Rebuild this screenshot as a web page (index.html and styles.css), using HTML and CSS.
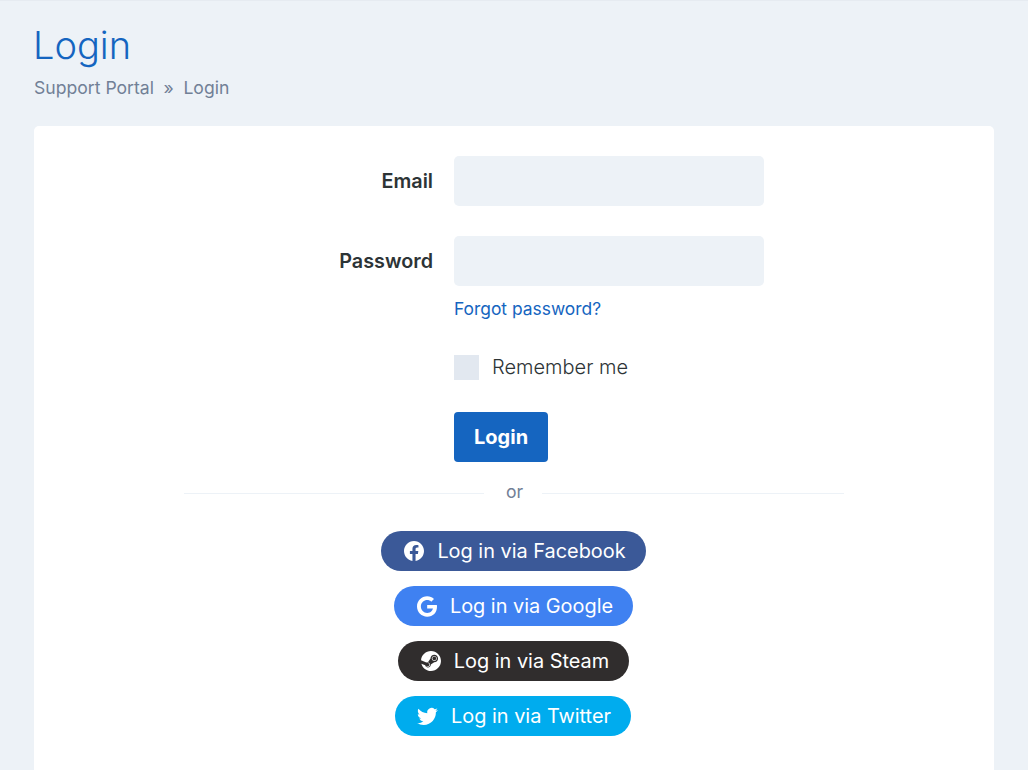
FILE: index.html
```html
<!DOCTYPE html>
<html lang="en">
<head>
    <meta charset="UTF-8">
    <title>Login - Support Portal</title>
    <link rel="stylesheet" href="styles.css">
</head>
<body>
    <div class="page-head">
        <h1>Login</h1>
        <div class="breadcrumb">
            <span>Support Portal</span>
            <span>»</span>
            <span>Login</span>
        </div>
    </div>

    <div class="card">
        <form class="login-form">
            <div class="row">
                <label class="row-label">Email</label>
                <div class="field"><input type="text" class="input"></div>
            </div>
            <div class="row">
                <label class="row-label">Password</label>
                <div class="field">
                    <input type="password" class="input">
                    <a class="forgot" href="#">Forgot password?</a>
                </div>
            </div>
            <div class="row row-remember">
                <div class="row-label"></div>
                <div class="field remember">
                    <span class="checkbox"></span>
                    <span class="remember-text">Remember me</span>
                </div>
            </div>
            <div class="row row-submit">
                <div class="row-label"></div>
                <div class="field"><button type="button" class="btn-login">Login</button></div>
            </div>
        </form>

        <div class="divider"><span>or</span></div>

        <div class="socials">
            <a class="social facebook" href="#">
                <svg viewBox="0 0 24 24" width="20" height="20"><path fill="#fff" d="M24 12.07C24 5.4 18.63 0 12 0S0 5.4 0 12.07c0 6.03 4.39 11.02 10.13 11.93v-8.44H7.08v-3.49h3.05V9.41c0-3.02 1.79-4.69 4.53-4.69 1.31 0 2.68.24 2.68.24v2.97h-1.51c-1.49 0-1.96.93-1.96 1.89v2.25h3.33l-.53 3.49h-2.8V24C19.61 23.09 24 18.1 24 12.07z"/></svg>
                Log in via Facebook
            </a>
            <a class="social google" href="#">
                <svg viewBox="0 0 488 512" width="20" height="21"><path fill="#fff" d="M488 261.8C488 403.3 391.1 504 248 504 110.8 504 0 393.2 0 256S110.8 8 248 8c66.8 0 123 24.5 166.3 64.9l-67.5 64.9C258.5 52.6 94.3 116.6 94.3 256c0 86.5 69.1 156.6 153.7 156.6 98.2 0 135-70.4 140.8-106.9H248v-85.3h236.1c2.3 12.7 3.9 24.9 3.9 41.4z"/></svg>
                Log in via Google
            </a>
            <a class="social steam" href="#">
                <svg viewBox="0 0 24 24" width="20" height="20"><path fill="#fff" d="M11.979 0C5.678 0 .511 4.86.022 11.037l6.432 2.658c.545-.371 1.203-.59 1.912-.59.063 0 .125.004.188.006l2.861-4.142V8.91c0-2.495 2.028-4.524 4.524-4.524 2.494 0 4.524 2.031 4.524 4.527s-2.03 4.525-4.524 4.525h-.105l-4.076 2.911c0 .052.004.105.004.159 0 1.875-1.515 3.396-3.39 3.396-1.635 0-3.016-1.173-3.331-2.727L.436 15.27C1.862 20.307 6.486 24 11.979 24c6.627 0 11.999-5.373 11.999-12S18.605 0 11.979 0zM7.54 18.21l-1.473-.61c.262.543.714.999 1.314 1.25 1.297.539 2.793-.076 3.332-1.375.263-.63.264-1.319.005-1.949s-.75-1.121-1.377-1.383c-.624-.26-1.29-.249-1.878-.03l1.523.63c.956.4 1.409 1.5 1.009 2.455-.397.957-1.497 1.41-2.454 1.012H7.54zm11.415-9.303c0-1.662-1.353-3.015-3.015-3.015-1.665 0-3.015 1.353-3.015 3.015 0 1.665 1.35 3.015 3.015 3.015 1.663 0 3.015-1.35 3.015-3.015zm-5.273-.005c0-1.252 1.013-2.266 2.265-2.266 1.249 0 2.266 1.014 2.266 2.266 0 1.251-1.017 2.265-2.266 2.265-1.253 0-2.265-1.014-2.265-2.265z"/></svg>
                Log in via Steam
            </a>
            <a class="social twitter" href="#">
                <svg viewBox="0 0 24 24" width="21" height="21"><path fill="#fff" d="M23.95 4.57a10 10 0 0 1-2.82.77 4.96 4.96 0 0 0 2.16-2.72c-.95.55-2 .96-3.13 1.19a4.92 4.92 0 0 0-8.38 4.48C7.69 8.1 4.07 6.13 1.64 3.16a4.82 4.82 0 0 0-.67 2.48c0 1.71.87 3.21 2.19 4.1a4.9 4.9 0 0 1-2.23-.62v.06a4.92 4.92 0 0 0 3.95 4.83 5 5 0 0 1-2.21.08 4.94 4.94 0 0 0 4.6 3.42A9.87 9.87 0 0 1 0 19.54a14 14 0 0 0 7.56 2.21c9.05 0 14-7.5 14-13.98 0-.21 0-.42-.02-.63a9.94 9.94 0 0 0 2.41-2.57z"/></svg>
                Log in via Twitter
            </a>
        </div>
    </div>
</body>
</html>
```

FILE: styles.css
```css
* {
    box-sizing: border-box;
}
html, body {
    height: 770px;
    overflow: hidden;
}
body {
    margin: 0;
    padding: 0 34px;
    font-family: Inter, sans-serif;
    font-size: 20px;
    color: #363a3f;
    background-color: #edf2f7;
    border-top: 1px solid #e6ebf1;
}
.page-head {
    padding-top: 22px;
}
h1 {
    margin: 0 0 0 -1px;
    font-size: 38px;
    font-weight: 300;
    line-height: 44px;
    color: #1565c0;
}
.breadcrumb {
    display: flex;
    gap: 9.6px;
    margin-top: 9px;
    font-size: 17.6px;
    line-height: 24px;
    color: #718096;
}
.card {
    margin-top: 26px;
    padding: 30px 0 0;
    height: 644px;
    background: white;
    border-radius: 5px 5px 0 0;
}
.login-form {
    display: flex;
    flex-direction: column;
}
.row {
    display: flex;
    gap: 20px;
    margin-bottom: 30px;
}
.row-label {
    width: 400px;
    height: 50px;
    padding-right: 1px;
    font-size: 19.8px;
    line-height: 50px;
    text-align: right;
    font-weight: 600;
    color: #2d3436;
}
.field {
    width: 310px;
}
.input {
    display: block;
    width: 100%;
    height: 50px;
    border: none;
    border-radius: 5px;
    background-color: #edf2f7;
}
.forgot {
    display: block;
    margin-top: 12px;
    font-size: 17.4px;
    line-height: 22px;
    color: #1565c0;
    text-decoration: none;
}
.remember {
    display: flex;
    align-items: center;
    gap: 13px;
    height: 25px;
    font-weight: 300;
    color: #2d3436;
}
.remember-text {
    margin-bottom: 2px;
}
.row-remember {
    margin-top: 5px;
    margin-bottom: 32px;
}
.row-remember .row-label {
    height: 25px;
}
.checkbox {
    width: 25px;
    height: 25px;
    background-color: #e2e8f0;
}
.row-submit {
    margin-bottom: 0;
}
.btn-login {
    height: 50px;
    padding: 0 20px;
    border: none;
    border-radius: 4px;
    background-color: #1565c0;
    color: white;
    font-family: Inter, sans-serif;
    font-size: 20px;
    font-weight: 700;
}
.divider {
    position: relative;
    width: 660px;
    margin: 20px auto 0;
    height: 22px;
    line-height: 22px;
    text-align: center;
    font-size: 17.6px;
    color: #718096;
}
.divider::before {
    content: "";
    position: absolute;
    left: 0;
    right: 0;
    top: 11px;
    border-top: 1px solid #edf2f7;
}
.divider span {
    position: relative;
    top: -1px;
    right: 1px;
    padding: 0 19px 0 22px;
    background: white;
}
.socials {
    display: flex;
    flex-direction: column;
    align-items: center;
    gap: 15px;
    margin-top: 27px;
    padding-right: 1px;
}
.social {
    display: flex;
    align-items: center;
    gap: 13px;
    height: 40px;
    padding: 0 20px 0 23px;
    border-radius: 20px;
    color: white;
    font-size: 19.9px;
    text-decoration: none;
}
.facebook {
    background-color: #3b5998;
}
.google {
    background-color: #3f81f1;
}
.steam {
    background-color: #302d2d;
}
.twitter {
    margin-right: 1px;
    padding-left: 22px;
    background-color: #00acee;
}
```
